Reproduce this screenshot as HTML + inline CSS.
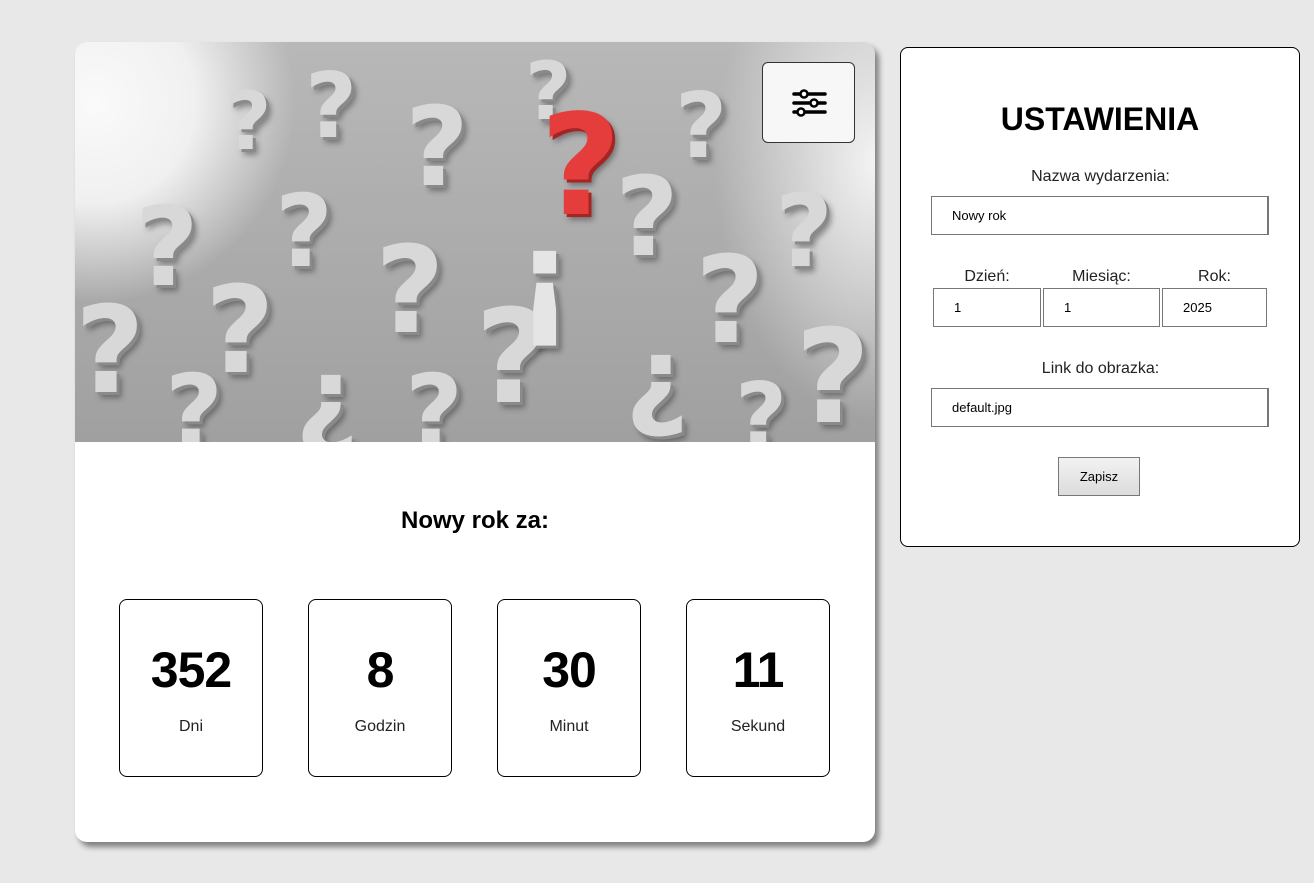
<!DOCTYPE html>
<html><head><meta charset="utf-8"><style>
*{box-sizing:border-box;margin:0;padding:0}
body{width:1314px;height:883px;background:#e8e8e8;font-family:"Liberation Sans",sans-serif;position:relative;overflow:hidden}
.card{position:absolute;left:75px;top:42px;width:800px;height:800px;background:#fff;border-radius:12px;box-shadow:4px 5px 6px rgba(0,0,0,.45);overflow:hidden}
.img{position:absolute;left:0;top:0;width:800px;height:400px;overflow:hidden;
background:radial-gradient(ellipse 200px 200px at 20px 60px,#fafafa 0%,#f0f0f0 50%,rgba(240,240,240,0) 100%),radial-gradient(ellipse 160px 260px at 800px 120px,#f3f3f3 0%,rgba(240,240,240,0) 100%),linear-gradient(#b8b8b8,#a0a0a0)}
.q{position:absolute;font-family:"DejaVu Sans",sans-serif;font-weight:bold;color:#d8d8d8;text-shadow:3px 3px 0 #8a8a8a,5px 6px 6px rgba(0,0,0,.35);line-height:1}
.set{position:absolute;left:687px;top:20px;width:93px;height:81px;background:#f7f7f7;border:1px solid #333;border-radius:6px}
h2{position:absolute;top:465px;left:0;width:800px;text-align:center;font-size:24px;font-weight:bold}
.box{position:absolute;top:557px;width:144px;height:178px;border:1px solid #000;border-radius:8px;text-align:center}
.box b{display:block;margin-top:44px;font-size:50px;line-height:52px;letter-spacing:-1px}
.box span{display:block;margin-top:22px;font-size:16px;color:#222}
.panel{position:absolute;left:900px;top:47px;width:400px;height:500px;background:#fff;border:1px solid #000;border-radius:8px}
.panel h1{position:absolute;top:53px;width:100%;text-align:center;font-size:32px;font-weight:bold}
.lbl{position:absolute;font-size:16px;color:#222;text-align:center}
.in{position:absolute;height:39px;border:1px solid #777;border-right-width:2px;font-size:13px;padding:11px 0 0 20px;color:#000}
.btn{position:absolute;left:157px;top:409px;width:82px;height:39px;border:1px solid #777;background:linear-gradient(#f2f2f2,#dcdcdc);font-size:13px;text-align:center;line-height:37px}
</style></head><body>
<div class="card">
 <div class="img">
  <div class="q" style="left:60px;top:150px;font-size:110px">?</div>
  <div class="q" style="left:0px;top:250px;font-size:120px">?</div>
  <div class="q" style="left:130px;top:230px;font-size:120px">?</div>
  <div class="q" style="left:200px;top:140px;font-size:100px">?</div>
  <div class="q" style="left:230px;top:20px;font-size:90px">?</div>
  <div class="q" style="left:330px;top:50px;font-size:110px">?</div>
  <div class="q" style="left:300px;top:190px;font-size:120px">?</div>
  <div class="q" style="left:400px;top:250px;font-size:130px">?</div>
  <div class="q" style="left:450px;top:10px;font-size:80px">?</div>
  <div class="q" style="left:540px;top:120px;font-size:110px">?</div>
  <div class="q" style="left:600px;top:40px;font-size:90px">?</div>
  <div class="q" style="left:620px;top:200px;font-size:120px">?</div>
  <div class="q" style="left:700px;top:140px;font-size:100px">?</div>
  <div class="q" style="left:720px;top:270px;font-size:130px">?</div>
  <div class="q" style="left:550px;top:280px;font-size:110px">¿</div>
  <div class="q" style="left:220px;top:300px;font-size:110px">¿</div>
  <div class="q" style="left:90px;top:320px;font-size:100px">?</div>
  <div class="q" style="left:330px;top:320px;font-size:100px">?</div>
  <div class="q" style="left:150px;top:40px;font-size:80px">?</div>
  <div class="q" style="left:660px;top:330px;font-size:90px">?</div>
  <div class="q" style="left:440px;top:170px;font-size:130px;color:#e5e5e5">¡</div>
  <div class="q" style="left:465px;top:55px;font-size:140px;color:#e53c3c;text-shadow:3px 3px 0 #a52525,5px 6px 6px rgba(0,0,0,.35)">?</div>
  <div class="set"><svg style="position:absolute;left:28px;top:22px" width="36" height="36" viewBox="0 0 36 36" fill="none" stroke="#000" stroke-width="3.5" stroke-linecap="round"><path d="M3 9h31M3 18h31M3 27h31" /><circle cx="13" cy="9" r="3.5" fill="#fff" stroke-width="2.5"/><circle cx="23" cy="18" r="3.5" fill="#fff" stroke-width="2.5"/><circle cx="10" cy="27" r="3.5" fill="#fff" stroke-width="2.5"/></svg></div>
 </div>
 <h2>Nowy rok za:</h2>
 <div class="box" style="left:44px"><b>352</b><span>Dni</span></div>
 <div class="box" style="left:233px"><b>8</b><span>Godzin</span></div>
 <div class="box" style="left:422px"><b>30</b><span>Minut</span></div>
 <div class="box" style="left:611px"><b>11</b><span>Sekund</span></div>
</div>
<div class="panel">
 <h1>USTAWIENIA</h1>
 <div class="lbl" style="left:0;width:399px;top:120px">Nazwa wydarzenia:</div>
 <div class="in" style="left:30px;top:148px;width:338px">Nowy rok</div>
 <div class="lbl" style="left:32px;width:108px;top:220px">Dzień:</div>
 <div class="lbl" style="left:142px;width:117px;top:220px">Miesiąc:</div>
 <div class="lbl" style="left:261px;width:105px;top:220px">Rok:</div>
 <div class="in" style="left:32px;top:240px;width:108px;border-right-width:1px">1</div>
 <div class="in" style="left:142px;top:240px;width:117px;border-right-width:1px">1</div>
 <div class="in" style="left:261px;top:240px;width:105px;border-right-width:1px">2025</div>
 <div class="lbl" style="left:0;width:399px;top:312px">Link do obrazka:</div>
 <div class="in" style="left:30px;top:340px;width:338px">default.jpg</div>
 <div class="btn">Zapisz</div>
</div>
</body></html>
